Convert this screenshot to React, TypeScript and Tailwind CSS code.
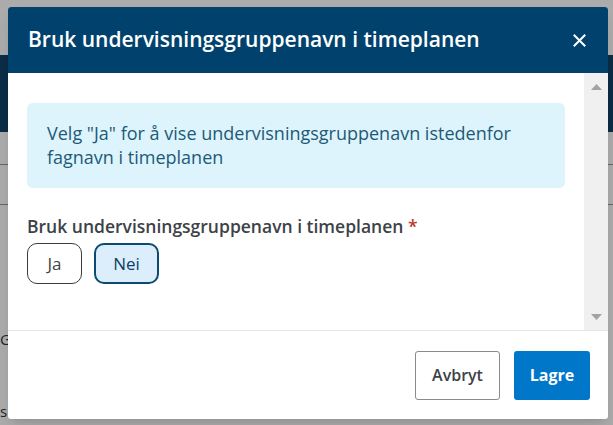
import React from 'react';

const font = { fontFamily: '"Open Sans", "Noto Sans", sans-serif' };

const ChoiceButton = ({ label, selected }: { label: string; selected?: boolean }) => (
  <button
    type="button"
    className={
      selected
        ? 'h-[41px] w-[65px] rounded-[10px] border-2 border-[#0c4a72] bg-[#dcedfc] text-[17px] text-[#0c3f63]'
        : 'h-[41px] w-[55px] rounded-[10px] border border-[#3c3c3c] bg-white text-[17px] text-[#444]'
    }
  >
    {label}
  </button>
);

export default function App() {
  return (
    <div className="relative h-[425px] w-[613px] overflow-hidden bg-white" style={font}>
      {/* page behind the dialog */}
      <div className="flex flex-col text-[15px] text-[#333]">
        <div className="h-[55px] bg-white" />
        <div className="h-[77px] bg-[#114468]" />
        <div className="h-[33px] border-b border-[#9a9a9a]" />
        <div className="h-[40px] border-b border-[#9a9a9a]" />
        <div className="h-[173px] flex items-end pb-[28px]">GF</div>
        <div className="h-[44px] flex items-end">skole</div>
      </div>
      <div className="absolute inset-0 bg-black/[0.33]" />

      {/* dialog */}
      <div className="absolute left-[8px] top-[7px] w-[600px] h-[412px] flex flex-col bg-white rounded-[3px] overflow-hidden shadow-lg">
        <div className="h-[66px] shrink-0 flex items-center justify-between bg-[#00426d] pl-[20px] pr-[22px]">
          <h2 className="text-[21px] font-semibold text-white">
            Bruk undervisningsgruppenavn i timeplanen
          </h2>
          <svg width="13" height="13" viewBox="0 0 13 13" className="text-white">
            <path d="M1.5 1.5 L11.5 11.5 M11.5 1.5 L1.5 11.5" stroke="currentColor" strokeWidth="2" strokeLinecap="square" />
          </svg>
        </div>

        <div className="flex flex-1 min-h-0 border-b border-[#e6e6e6]">
          <div className="flex-1 pl-[19px] pr-[19px] pt-[30px]">
            <div className="rounded-[6px] bg-[#ddf4fc] px-[20px] pt-[18px] pb-[19px] text-[18px] leading-[24px] text-[#1e5a78]">
              Velg "Ja" for å vise undervisningsgruppenavn istedenfor fagnavn i timeplanen
            </div>
            <div className="mt-[26px] text-[17.5px] leading-[24px] font-semibold text-[#3d4247]">
              Bruk undervisningsgruppenavn i timeplanen <span className="text-[#c0392b]">*</span>
            </div>
            <div className="mt-[5px] flex gap-[12px]">
              <ChoiceButton label="Ja" />
              <ChoiceButton label="Nei" selected />
            </div>
          </div>
          <div className="w-[24px] bg-[#f0f0f0] flex flex-col items-center justify-between pt-[11px] pb-[10px]">
            <svg width="11" height="6" viewBox="0 0 11 6"><path d="M5.5 0 L11 6 L0 6 Z" fill="#a3a3a3" /></svg>
            <svg width="11" height="6" viewBox="0 0 11 6"><path d="M0 0 L11 0 L5.5 6 Z" fill="#a3a3a3" /></svg>
          </div>
        </div>

        <div className="h-[88px] shrink-0 flex items-center justify-end gap-[14px] pr-[18px]">
          <button type="button" className="h-[49px] w-[85px] rounded-[3px] border border-[#8a8a8a] bg-white text-[16px] font-semibold text-[#3d4247]">
            Avbryt
          </button>
          <button type="button" className="h-[49px] w-[76px] rounded-[3px] bg-[#0077c8] text-[16px] font-bold text-white">
            Lagre
          </button>
        </div>
      </div>
    </div>
  );
}
